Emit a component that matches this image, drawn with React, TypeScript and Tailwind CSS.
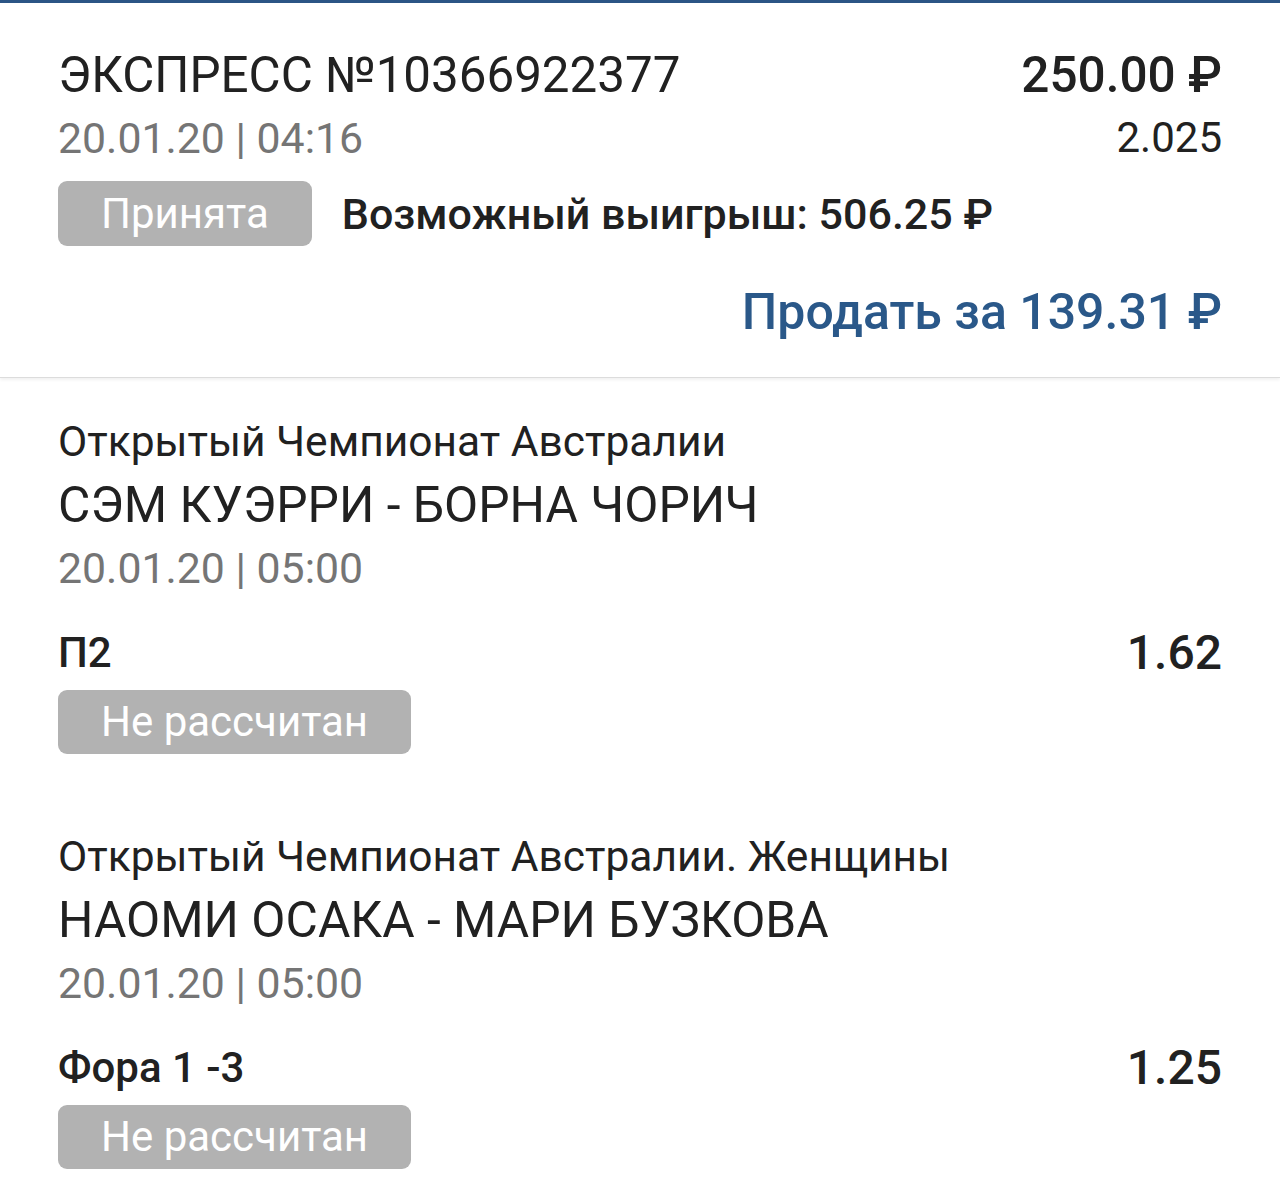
export default function App() {
  const legs = [
    {
      league: "Открытый Чемпионат Австралии",
      match: "СЭМ КУЭРРИ - БОРНА ЧОРИЧ",
      date: "20.01.20 | 05:00",
      bet: "П2",
      odds: "1.62",
    },
    {
      league: "Открытый Чемпионат Австралии. Женщины",
      match: "НАОМИ ОСАКА - МАРИ БУЗКОВА",
      date: "20.01.20 | 05:00",
      bet: "Фора 1 -3",
      odds: "1.25",
    },
  ];

  return (
    <div className="min-h-[1195px] w-[1280px] bg-white font-['Roboto','Noto_Sans',sans-serif] text-[#212121]">
      <div className="h-[3px] bg-[#2b5585]" />

      {/* bet header */}
      <div className="border-b border-[#dcdcdc] px-[58px] pt-[41px] pb-[35px] shadow-[0_2px_3px_rgba(0,0,0,0.06)]">
        <div className="flex items-start justify-between">
          <span className="text-[49.3px] leading-[62px]">ЭКСПРЕСС №10366922377</span>
          <span className="text-[49.5px] leading-[62px] font-medium">250.00 ₽</span>
        </div>
        <div className="mt-[2px] flex items-start justify-between">
          <span className="text-[42.8px] leading-[60px] text-[#757575]">20.01.20 | 04:16</span>
          <span className="text-[42px] leading-[60px]">2.025</span>
        </div>
        <div className="mt-[13px] flex items-center gap-[30px]">
          <span className="h-[65px] rounded-[9px] bg-[#b2b2b2] px-[43px] text-[42px] leading-[65px] text-white">
            Принята
          </span>
          <span className="text-[43px] leading-[60px] font-medium">Возможный выигрыш: 506.25 ₽</span>
        </div>
        <div className="mt-[36px] flex justify-end">
          <span className="text-[50px] leading-[60px] font-medium text-[#2a5889]">Продать за 139.31 ₽</span>
        </div>
      </div>

      {/* events */}
      {legs.map((leg) => (
        <div key={leg.match} className="px-[58px] pt-[34px] pb-[39px]">
          <div className="text-[42.5px] leading-[60px]">{leg.league}</div>
          <div className="mt-[3px] text-[49.7px] leading-[60px]">{leg.match}</div>
          <div className="mt-[3px] text-[42.8px] leading-[60px] text-[#757575]">{leg.date}</div>
          <div className="mt-[25px] flex items-start justify-between">
            <span className="text-[42px] leading-[60px] font-medium">{leg.bet}</span>
            <span className="text-[48px] leading-[60px] font-medium">{leg.odds}</span>
          </div>
          <div className="mt-[7px] flex">
            <span className="h-[64px] rounded-[9px] bg-[#b2b2b2] px-[43px] text-[42px] leading-[64px] text-white">
              Не рассчитан
            </span>
          </div>
        </div>
      ))}
    </div>
  );
}
